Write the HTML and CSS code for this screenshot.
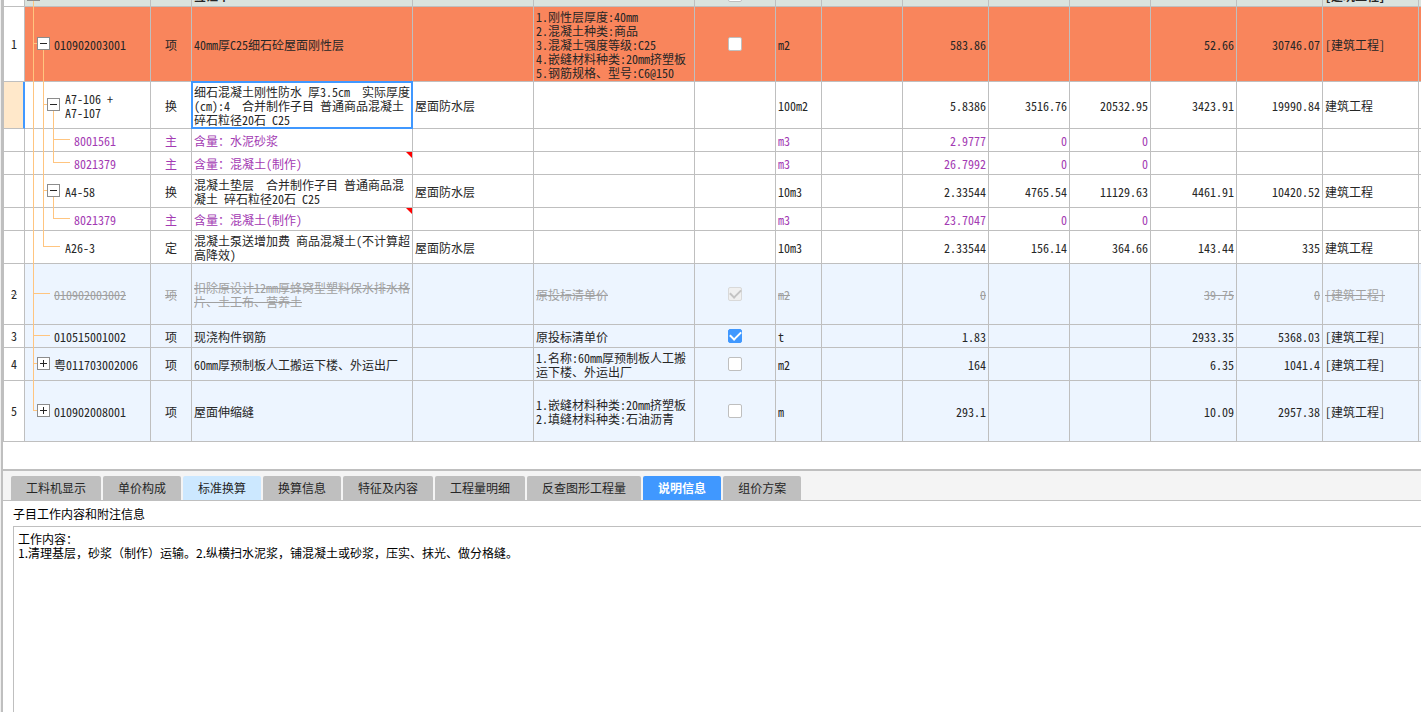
FILE: index.html
```
<!DOCTYPE html>
<html lang="zh-CN">
<head>
<meta charset="utf-8">
<title>分部分项</title>
<link rel="stylesheet" href="styles.css">
</head>
<body>
<main class="app">
<section class="sheet">
<table class="grid">
<colgroup>
<col class="c-no"><col class="c-code"><col class="c-kind"><col class="c-name"><col class="c-spec"><col class="c-feat"><col class="c-lock"><col class="c-unit"><col class="c-81"><col class="c-86"><col class="c-81"><col class="c-81"><col class="c-86"><col class="c-86"><col class="c-major"><col class="c-end">
</colgroup>
<tbody>
<tr class="h1 group"><th></th><td class="code l0"><i class="v v1 from-mid"></i><button class="exp" aria-label="折叠"></button></td><td></td><td>签证单</td><td></td><td></td><td class="tick"><input type="checkbox" aria-label="锁定"></td><td></td><td></td><td></td><td></td><td></td><td></td><td></td><td>[建筑工程]</td><td></td></tr>
<tr class="h5 hot"><th>1</th><td class="code l1"><i class="v v1"></i><i class="h"></i><i class="v v2 from-mid"></i><button class="exp" aria-label="折叠"></button>010902003001</td><td class="mid">项</td><td>40mm厚C25细石砼屋面刚性层</td><td></td><td>1.刚性层厚度:40mm<br>2.混凝土种类:商品<br>3.混凝土强度等级:C25<br>4.嵌缝材料种类:20mm挤塑板<br>5.钢筋规格、型号:C6@150</td><td class="tick"><input type="checkbox" aria-label="锁定"></td><td>m2</td><td></td><td class="num">583.86</td><td></td><td></td><td class="num">52.66</td><td class="num">30746.07</td><td>[建筑工程]</td><td></td></tr>
<tr class="h3"><th class="current"></th><td class="code l2"><i class="v v1"></i><i class="v v2"></i><i class="h"></i><i class="v v3 from-mid"></i><button class="exp" aria-label="折叠"></button>A7-106 +<br>A7-107</td><td class="mid">换</td><td class="selected">细石混凝土刚性防水 厚3.5cm&nbsp; 实际厚度(cm):4&nbsp; 合并制作子目 普通商品混凝土 碎石粒径20石 C25</td><td>屋面防水层</td><td></td><td></td><td>100m2</td><td></td><td class="num">5.8386</td><td class="num">3516.76</td><td class="num">20532.95</td><td class="num">3423.91</td><td class="num">19990.84</td><td>建筑工程</td><td></td></tr>
<tr class="h1 main"><th></th><td class="code l3"><i class="v v1"></i><i class="v v2"></i><i class="v v3"></i><i class="h leaf"></i>8001561</td><td class="mid">主</td><td>含量：水泥砂浆</td><td></td><td></td><td></td><td>m3</td><td></td><td class="num">2.9777</td><td class="num">0</td><td class="num">0</td><td></td><td></td><td></td><td></td></tr>
<tr class="h1 main"><th></th><td class="code l3"><i class="v v1"></i><i class="v v2"></i><i class="v v3 to-mid"></i><i class="h leaf"></i>8021379</td><td class="mid">主</td><td class="flag">含量：混凝土(制作)</td><td></td><td></td><td></td><td>m3</td><td></td><td class="num">26.7992</td><td class="num">0</td><td class="num">0</td><td></td><td></td><td></td><td></td></tr>
<tr class="h2"><th></th><td class="code l2"><i class="v v1"></i><i class="v v2"></i><i class="h"></i><i class="v v3 from-mid"></i><button class="exp" aria-label="折叠"></button>A4-58</td><td class="mid">换</td><td>混凝土垫层&nbsp; 合并制作子目 普通商品混凝土 碎石粒径20石 C25</td><td>屋面防水层</td><td></td><td></td><td>10m3</td><td></td><td class="num">2.33544</td><td class="num">4765.54</td><td class="num">11129.63</td><td class="num">4461.91</td><td class="num">10420.52</td><td>建筑工程</td><td></td></tr>
<tr class="h1 main"><th></th><td class="code l3"><i class="v v1"></i><i class="v v2"></i><i class="v v3 to-mid"></i><i class="h leaf"></i>8021379</td><td class="mid">主</td><td class="flag">含量：混凝土(制作)</td><td></td><td></td><td></td><td>m3</td><td></td><td class="num">23.7047</td><td class="num">0</td><td class="num">0</td><td></td><td></td><td></td><td></td></tr>
<tr class="h2"><th></th><td class="code l2"><i class="v v1"></i><i class="v v2 to-mid"></i><i class="h leaf"></i>A26-3</td><td class="mid">定</td><td>混凝土泵送增加费 商品混凝土(不计算超高降效)</td><td>屋面防水层</td><td></td><td></td><td>10m3</td><td></td><td class="num">2.33544</td><td class="num">156.14</td><td class="num">364.66</td><td class="num">143.44</td><td class="num">335</td><td>建筑工程</td><td></td></tr>
<tr class="h4 item void"><th>2</th><td class="code l1"><i class="v v1"></i><i class="h leaf"></i>010902003002</td><td class="mid">项</td><td>扣除原设计12mm厚蜂窝型塑料保水排水格片、土工布、营养土</td><td></td><td>原投标清单价</td><td class="tick"><input type="checkbox" aria-label="锁定" checked disabled></td><td>m2</td><td></td><td class="num">0</td><td></td><td></td><td class="num">39.75</td><td class="num">0</td><td>[建筑工程]</td><td></td></tr>
<tr class="h1 item"><th>3</th><td class="code l1"><i class="v v1"></i><i class="h leaf"></i>010515001002</td><td class="mid">项</td><td>现浇构件钢筋</td><td></td><td>原投标清单价</td><td class="tick"><input type="checkbox" aria-label="锁定" checked></td><td>t</td><td></td><td class="num">1.83</td><td></td><td></td><td class="num">2933.35</td><td class="num">5368.03</td><td>[建筑工程]</td><td></td></tr>
<tr class="h2 item"><th>4</th><td class="code l1"><i class="v v1"></i><i class="h"></i><button class="exp plus" aria-label="展开"></button>粤011703002006</td><td class="mid">项</td><td>60mm厚预制板人工搬运下楼、外运出厂</td><td></td><td>1.名称:60mm厚预制板人工搬运下楼、外运出厂</td><td class="tick"><input type="checkbox" aria-label="锁定"></td><td>m2</td><td></td><td class="num">164</td><td></td><td></td><td class="num">6.35</td><td class="num">1041.4</td><td>[建筑工程]</td><td></td></tr>
<tr class="h4 item"><th>5</th><td class="code l1"><i class="v v1 to-mid"></i><i class="h"></i><button class="exp plus" aria-label="展开"></button>010902008001</td><td class="mid">项</td><td>屋面伸缩缝</td><td></td><td>1.嵌缝材料种类:20mm挤塑板<br>2.填缝材料种类:石油沥青</td><td class="tick"><input type="checkbox" aria-label="锁定"></td><td>m</td><td></td><td class="num">293.1</td><td></td><td></td><td class="num">10.09</td><td class="num">2957.38</td><td>[建筑工程]</td><td></td></tr>
</tbody>
</table>
</section>
<nav class="tabs">
<button class="tab">工料机显示</button><button class="tab">单价构成</button><button class="tab soft">标准换算</button><button class="tab">换算信息</button><button class="tab">特征及内容</button><button class="tab">工程量明细</button><button class="tab">反查图形工程量</button><button class="tab active">说明信息</button><button class="tab">组价方案</button>
</nav>
<section class="notes">
<label class="notes-title" for="notes">子目工作内容和附注信息</label>
<textarea class="notes-text" id="notes" readonly>工作内容：
1.清理基层，砂浆（制作）运输。2.纵横扫水泥浆，铺混凝土或砂浆，压实、抹光、做分格缝。</textarea>
</section>
</main>
</body>
</html>
```
FILE: styles.css
```
* { box-sizing: border-box; }

body {
  margin: 0;
  background: #f0f0f0;
  color: #262626;
}

body, button, textarea {
  font-family: "Noto Sans CJK SC", sans-serif;
  font-size: 12px;
  line-height: 14px;
}

.app {
  display: flex;
  flex-direction: column;
  height: 100vh;
  margin-left: 1px;
  border-left: 2px solid #bfbfbf;
  background: #fff;
  overflow: hidden;
}

.sheet {
  flex: none;
  padding-bottom: 27px;
  border-bottom: 2px solid #bfbfbf;
  overflow: hidden;
}

/* The list is scrolled so that only the foot of the group row shows. */
.grid {
  width: 100%;
  min-width: 1200px;
  margin-top: -16px;
  table-layout: fixed;
  border-spacing: 0;
  border-left: 1px solid #bfbfbf;
  font-feature-settings: "hwid";
}

.c-no { width: 21px; }
.c-code { width: 126px; }
.c-kind { width: 41px; }
.c-spec { width: 121px; }
.c-feat { width: 161px; }
.c-lock, .c-81 { width: 81px; }
.c-unit { width: 46px; }
.c-86 { width: 86px; }
.c-major { width: 96px; }
.c-end { width: 2px; }

.h1 { height: 23px; }
.h2 { height: 33px; }
.h3 { height: 47px; }
.h4 { height: 61px; }
.h5 { height: 75px; }

td, th {
  position: relative;
  padding: 1px 2px 0;
  border-right: 1px solid #bfbfbf;
  border-bottom: 1px solid #bfbfbf;
  text-align: left;
  font-weight: 400;
  vertical-align: middle;
}

th { padding: 0; text-align: center; background: #fff; }
td:last-child { padding: 0; border-right: 0; }
.mid { text-align: center; }
.num { text-align: right; }
.tick { padding: 0; }

.group { background: #dae3de; }
.group td { font-weight: 700; }
.hot { background: #f9855c; }
.main { color: #a33ab3; }
.item { background: #edf5ff; }
.void { color: #a0a0a0; text-decoration: line-through; }
.void th { color: #262626; }

.current { background: #ffe8ca; border-right: 2px solid #4098ff; }
.selected::after {
  content: "";
  position: absolute;
  inset: -1px;
  border: 2px solid #4098ff;
  z-index: 1;
}
.flag::after {
  content: "";
  position: absolute;
  top: 0;
  right: 0;
  border-top: 6px solid #f00;
  border-left: 6px solid transparent;
}

/* Tree guides */
.l1 { padding-left: 29px; }
.l2 { padding-left: 40px; }
.l3 { padding-left: 49px; }

.v {
  position: absolute;
  top: 0;
  bottom: -1px;
  width: 1px;
  background: #ffc580;
}
.v1 { left: 8px; }
.v2 { left: 18px; }
.v3 { left: 28px; }
.from-mid { top: 50%; }
.to-mid { bottom: 50%; }

.h {
  position: absolute;
  top: 50%;
  width: 4px;
  height: 1px;
  margin-top: -1px;
  background: #ffc580;
}
.h.leaf { width: 16px; }
.l1 .h { left: 9px; }
.l2 .h { left: 19px; }
.l3 .h { left: 29px; }

.exp {
  position: absolute;
  top: 50%;
  width: 13px;
  height: 13px;
  margin-top: -7px;
  padding: 0;
  border: 1px solid #8c8c8c;
  background: linear-gradient(#262626, #262626) center / 7px 1px no-repeat #fff;
}
.exp.plus {
  background:
    linear-gradient(#262626, #262626) center / 7px 1px no-repeat,
    linear-gradient(#262626, #262626) center / 1px 7px no-repeat #fff;
}
.l0 .exp { left: 2px; }
.l1 .exp { left: 12px; }
.l2 .exp { left: 22px; }

input[type="checkbox"] {
  appearance: none;
  display: block;
  width: 14px;
  height: 14px;
  margin: 0 auto;
  border: 1px solid #bfbfbf;
  border-radius: 2px;
  background: #fff;
}
input[type="checkbox"]:checked {
  display: grid;
  place-items: center;
  border-color: #4098ff;
  background: #4098ff;
}
input[type="checkbox"]:checked::before {
  content: "";
  width: 9px;
  height: 5px;
  margin-bottom: 3px;
  border-left: 2px solid #fff;
  border-bottom: 2px solid #fff;
  transform: rotate(-45deg);
}
input[type="checkbox"]:disabled {
  border-color: #d9d9d9;
  background: #f0f0f0;
}
input[type="checkbox"]:disabled::before { border-color: #c4c4c4; }

.tabs {
  display: flex;
  flex: none;
  gap: 2px;
  padding: 5px 8px 0;
  background: #f4f4f4;
  border-bottom: 1px solid #bfbfbf;
}
.tab {
  height: 24px;
  padding: 0 15px;
  border: 0;
  border-radius: 2px 2px 0 0;
  background: #bfbfbf;
  color: #262626;
  white-space: nowrap;
}
.tab.soft { background: #cce8ff; }
.tab.active { background: #4098ff; color: #fff; font-weight: 700; }

.notes {
  display: flex;
  flex: 1;
  flex-direction: column;
  padding: 6px 0 0 10px;
  color: #000;
}
.notes-title { margin-bottom: 5px; }
.notes-text {
  flex: 1;
  padding: 5px 4px;
  border: 1px solid #bfbfbf;
  border-width: 1px 0 0 1px;
  outline: 0;
  resize: none;
  color: #000;
}
```
